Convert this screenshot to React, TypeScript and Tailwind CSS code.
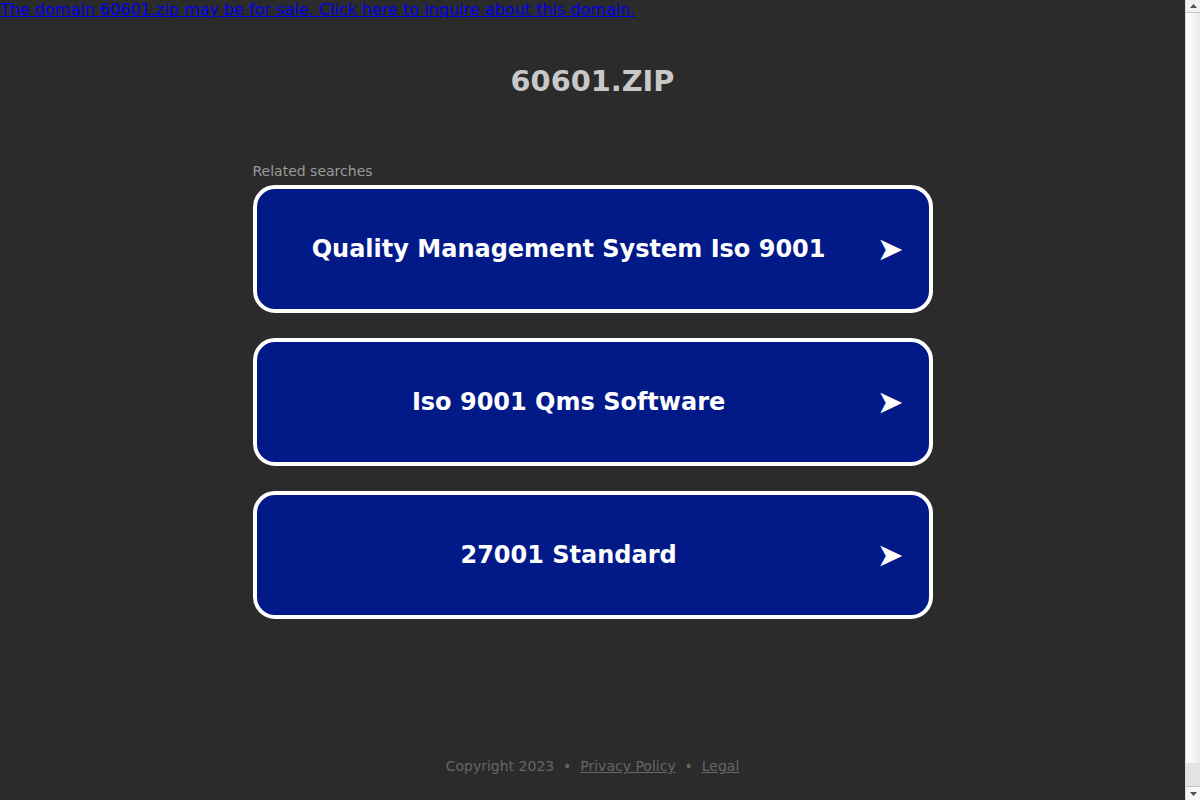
const searches = [
  "Quality Management System Iso 9001",
  "Iso 9001 Qms Software",
  "27001 Standard",
];

function ScrollArrow({ down }: { down?: boolean }) {
  return (
    <svg width="7" height="4" viewBox="0 0 7 4" aria-hidden>
      <path d={down ? "M0 0h7L3.5 4z" : "M3.5 0L7 4H0z"} fill="#505050" />
    </svg>
  );
}

export default function App() {
  return (
    <div
      className="h-[800px] flex bg-[#2b2b2b] overflow-hidden"
      style={{ fontFamily: '"DejaVu Sans", sans-serif' }}
    >
      <div className="flex-1 flex flex-col">
        <a href="#" className="text-base text-[#0000ee] underline leading-[19px] self-start">
          The domain 60601.zip may be for sale. Click here to inquire about this domain.
        </a>

        <h1 className="mt-[45px] text-center text-[28.8px] font-bold text-[#c8c8c8] leading-[34px]">
          60601.ZIP
        </h1>

        <div className="mx-auto w-[680px] mt-[65px]">
          <p className="text-sm text-[#999999] leading-[16px]">Related searches</p>
          <div className="mt-[6px] flex flex-col gap-[25px]">
            {searches.map((s) => (
              <a
                key={s}
                href="#"
                className="flex items-center h-[128px] rounded-[22px] border-4 border-white bg-[#021a88] pl-[29px] pr-[25px] gap-[25px] no-underline"
              >
                <span className="flex-1 text-center text-white font-bold text-[24px]">{s}</span>
                <span className="text-white text-[32px] leading-none">➤</span>
              </a>
            ))}
          </div>
        </div>

        <footer className="mt-auto mb-[26px] text-center text-sm text-[#666666] leading-[16px]">
          Copyright 2023 &nbsp;•&nbsp;{" "}
          <a href="#" className="underline">Privacy Policy</a> &nbsp;•&nbsp;{" "}
          <a href="#" className="underline">Legal</a>
        </footer>
      </div>

      {/* scrollbar */}
      <div className="w-[15px] flex flex-col border-l border-[#d9d9d9] bg-[#f1f1f1]">
        <div className="h-[13px] flex items-center justify-center border-b border-[#c8c8c8]">
          <ScrollArrow />
        </div>
        <div className="flex-1 bg-gradient-to-r from-[#ffffff] to-[#ececec]" />
        <div className="h-[23px] bg-[#e3e3e3]" />
        <div className="h-[14px] flex items-center justify-center border-t border-[#c8c8c8] bg-[#f6f6f6]">
          <ScrollArrow down />
        </div>
      </div>
    </div>
  );
}
